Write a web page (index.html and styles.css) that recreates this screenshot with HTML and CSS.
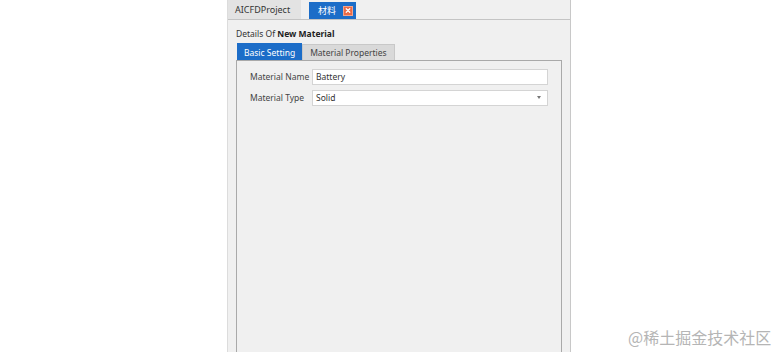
FILE: index.html
```html
<!DOCTYPE html>
<html lang="en">
<head>
    <meta charset="UTF-8">
    <meta name="viewport" content="width=device-width, initial-scale=1.0">
    <title>AICFD Material</title>
    <link rel="stylesheet" href="styles.css">
</head>
<body>
    <div class="panel">
        <div class="doc-tabs">
            <div class="doc-tab">AICFDProject</div>
            <div class="doc-tab active">
                <span class="doc-tab-title">材料</span>
                <span class="close-btn">
                    <svg width="9" height="9" viewBox="0 0 9 9">
                        <path d="M2.5 2.5 L6.5 6.5 M6.5 2.5 L2.5 6.5" stroke="#fff" stroke-width="1.4" stroke-linecap="round"/>
                    </svg>
                </span>
            </div>
        </div>

        <div class="content">
            <div class="details-title">Details Of <strong>New Material</strong></div>

            <div class="inner-tabs">
                <div class="inner-tab active">Basic Setting</div>
                <div class="inner-tab">Material Properties</div>
            </div>

            <div class="frame">
                <div class="form-row">
                    <label for="materialName">Material Name</label>
                    <input type="text" id="materialName" class="field" value="Battery">
                </div>
                <div class="form-row">
                    <label for="materialType">Material Type</label>
                    <div class="field combo" id="materialType">
                        <span>Solid</span>
                        <span class="arrow"></span>
                    </div>
                </div>
            </div>
        </div>
    </div>

    <div class="watermark">@稀土掘金技术社区</div>
</body>
</html>
```

FILE: styles.css
```css
/* page */
body {
    margin: 0;
    background-color: #ffffff;
    font-family: "Noto Sans", "Open Sans", sans-serif;
    font-size: 8.5px;
    color: #333;
    overflow: hidden;
    height: 352px;
}

.panel {
    margin-left: 227px;
    width: 342px;
    height: 360px;
    background-color: #f0f0f0;
    border-left: 1px solid #dcdcdc;
    border-right: 1px solid #c8c8c8;
}

/* document tabs */
.doc-tabs {
    display: flex;
    align-items: flex-end;
    height: 19px;
    border-bottom: 1px solid #c4c4c4;
    background-color: #f0f0f0;
}

.doc-tab {
    display: flex;
    align-items: center;
    height: 19px;
    width: 73px;
    padding-left: 7px;
    box-sizing: border-box;
    background-color: #e3e3e3;
    color: #333;
    font-size: 9px;
    white-space: nowrap;
}

.doc-tab.active {
    margin-left: 8px;
    width: 47px;
    height: 17px;
    padding-left: 9px;
    background-color: #1c6dc8;
    color: #fff;
    font-family: "Noto Sans CJK SC", sans-serif;
    font-size: 9px;
}

.close-btn {
    display: flex;
    align-items: center;
    justify-content: center;
    width: 10px;
    height: 10px;
    margin-left: 7px;
    background-color: #ea6a46;
    border: 1px solid #f3a48c;
    box-sizing: border-box;
}

/* content */
.content {
    padding: 8px 8px 0 8px;
}

.details-title {
    height: 15px;
    line-height: 12px;
    color: #333;
}

.details-title strong {
    color: #222;
}

.inner-tabs {
    display: flex;
    align-items: flex-end;
    height: 17px;
    margin-left: 1px;
}

.inner-tab {
    height: 16px;
    line-height: 16px;
    padding: 0 7px;
    background-color: #d9d9d9;
    border: 1px solid #c8c8c8;
    border-bottom: none;
    box-sizing: border-box;
    color: #444;
    white-space: nowrap;
}

.inner-tab.active {
    height: 17px;
    line-height: 17px;
    padding: 0 6px;
    background-color: #1c6dc8;
    border-color: #1c6dc8;
    color: #fff;
}

.frame {
    height: 300px;
    border: 1px solid #a9a9a9;
    padding: 7px 13px 0 13px;
    background-color: #f0f0f0;
}

.form-row {
    display: flex;
    align-items: center;
    height: 17px;
    margin-bottom: 4px;
}

.form-row label {
    flex-shrink: 0;
    width: 62px;
    color: #444;
    white-space: nowrap;
}

.field {
    flex: 1;
    min-width: 0;
    height: 16px;
    box-sizing: border-box;
    padding: 0 3px;
    border: 1px solid #d4d4d4;
    background-color: #ffffff;
    font-family: inherit;
    font-size: 8.5px;
    color: #333;
    outline: none;
}

.combo {
    display: flex;
    align-items: center;
    justify-content: space-between;
}

.arrow {
    width: 0;
    height: 0;
    margin-right: 3px;
    border-left: 2.5px solid transparent;
    border-right: 2.5px solid transparent;
    border-top: 3px solid #777;
}

/* watermark over the page corner */
.watermark {
    position: absolute;
    left: 628px;
    top: 325px;
    font-family: "Noto Sans CJK SC", sans-serif;
    font-size: 16px;
    color: #b5b5b5;
}
```
